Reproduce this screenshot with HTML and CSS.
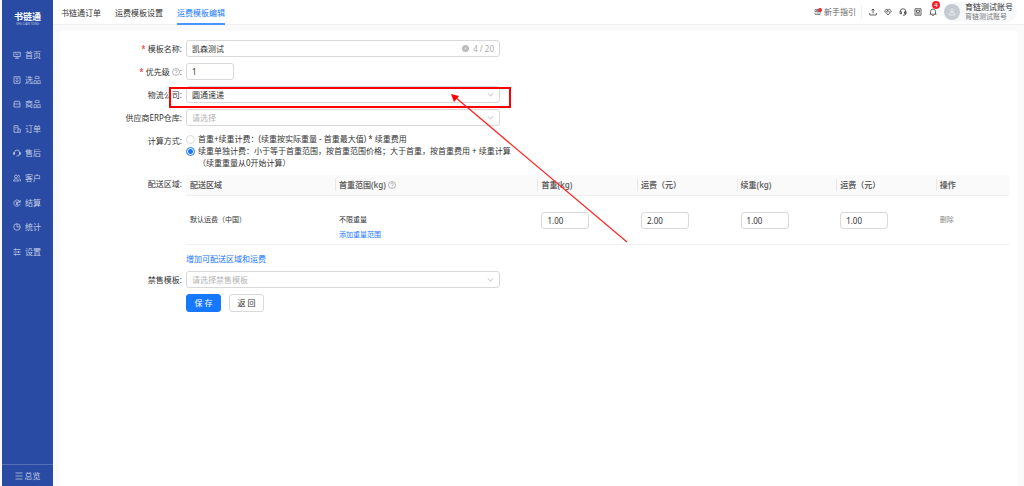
FILE: index.html
```html
<!DOCTYPE html>
<html lang="zh-CN">
<head>
<meta charset="utf-8">
<title>运费模板编辑</title>
<link rel="stylesheet" href="styles.css">
</head>
<body>
<div class="app">
  <aside class="sidebar">
    <div class="logo"><strong>书链通</strong><small>SHU LIAN TONG</small></div>
    <nav>
      <ul class="menu">
        <li><a href="#"><svg class="icon" viewBox="0 0 16 16"><path d="M1.500 2.500h13v8.500h-13zM4 14.500h8M8 11v3M4.500 6h3l1 2 3-3"/></svg>首页</a></li>
        <li><a href="#"><svg class="icon" viewBox="0 0 16 16"><path d="M2 1.500h12v13H2zM5 4.500h6M8 7l2.500 2.500L8 12 5.500 9.500z"/></svg>选品</a></li>
        <li><a href="#"><svg class="icon" viewBox="0 0 16 16"><path d="M3.500 2.500h9l1.500 4v7.500H2V6.500zM2 8h12"/></svg>商品</a></li>
        <li><a href="#"><svg class="icon" viewBox="0 0 16 16"><path d="M10 8V1.500H2v13h12.500V8H10v6.500M4.500 5h3M4.500 8h2"/></svg>订单</a></li>
        <li><a href="#"><svg class="icon" viewBox="0 0 16 16"><path d="M3 10V7a5 5 0 0 1 10 0v3a4 4 0 0 1-4 4H7M1 7h2v4H1zM13 7h2v4h-2z"/></svg>售后</a></li>
        <li><a href="#"><svg class="icon" viewBox="0 0 16 16"><circle cx="6" cy="5" r="3"/><path d="M1 14c0-6 10-6 10 0zM10 2.500a2.500 2.500 0 0 1 1 5M12 9c2 .5 3 2.500 3 5h-2"/></svg>客户</a></li>
        <li><a href="#"><svg class="icon" viewBox="0 0 16 16"><path d="M14 6.500A6.300 6.300 0 1 0 14 10M14.500 2v4.500H10M5.500 4.500 8 7.500l2.500-3M5.500 8h5M5.500 10.500h5M8 7.500v5"/></svg>结算</a></li>
        <li><a href="#"><svg class="icon" viewBox="0 0 16 16"><circle cx="8" cy="8" r="6.500"/><path d="M8 1.500V8h6.500"/></svg>统计</a></li>
        <li><a href="#"><svg class="icon" viewBox="0 0 16 16"><path d="M1 3h14M1 8h14M1 13h14M5 1v4M11 6v4M5 11v4"/></svg>设置</a></li>
      </ul>
    </nav>
    <button class="overview" type="button"><svg class="icon" viewBox="0 0 16 16"><path d="M1 2h14M1 8h14M1 14h14"/></svg>总览</button>
  </aside>

  <div class="content">
    <header class="topbar">
      <nav class="tabs">
        <a href="#">书链通订单</a>
        <a href="#">运费模板设置</a>
        <a href="#" class="active" aria-current="page">运费模板编辑</a>
      </nav>
      <div class="tools">
        <a class="guide" href="#"><svg class="icon" viewBox="0 0 16 16"><path d="M9 3H2v4h10v6H2V9M4 5h4M5 10h5"/><circle class="dot" cx="12" cy="4" r="4"/></svg>新手指引</a>
        <button type="button" aria-label="上传"><svg class="icon" viewBox="0 0 16 16"><path d="M8 11V2M5 5l3-3 3 3M1.500 10v4h13v-4"/></svg></button>
        <button type="button" aria-label="合作"><svg class="icon" viewBox="0 0 16 16"><path d="M1 6l4-3.500 3 1.500 3-1.500L15 6l-7 8zM8 4 5 7l2 1 2-1.500L12 9"/></svg></button>
        <button type="button" aria-label="客服"><svg class="icon" viewBox="0 0 16 16"><path d="M2.500 8V7a5.500 5.500 0 0 1 11 0v4a3.500 3.500 0 0 1-3.500 3.500H8M2 7.500h3v4H2zM11 7.500h3v4h-3z"/></svg></button>
        <button type="button" aria-label="账单"><svg class="icon" viewBox="0 0 16 16"><path d="M2 1.500h12v13H2zM5 4.500h6v4H5zM4.500 11.500h7"/></svg></button>
        <button type="button" class="bell" aria-label="通知"><svg class="icon" viewBox="0 0 16 16"><path d="M3 12V7a5 5 0 0 1 10 0v5M1 12.500h14M6.500 15h3"/></svg><span class="badge">4</span></button>
        <div class="account">
          <span class="avatar"><svg class="icon" viewBox="0 0 16 16"><circle cx="8" cy="5" r="3"/><path d="M2 14v-2l3-3h6l3 3v2z"/></svg></span>
          <span class="who"><span>育链测试账号</span><small>育链测试账号</small></span>
        </div>
      </div>
    </header>

    <main class="panel">
      <form class="form">
        <label class="label required" for="name">模板名称:</label>
        <div class="field wide">
          <input id="name" type="text" value="凯森测试">
          <span class="suffix"><svg class="clear" viewBox="0 0 16 16"><circle cx="8" cy="8" r="8"/><path d="M6 6l4 4M10 6l-4 4"/></svg>4 / 20</span>
        </div>

        <label class="label required" for="priority">优先级 <svg class="help" viewBox="0 0 16 16"><circle cx="8" cy="8" r="7"/><path d="M5.500 6.500C5.500 3 10.500 3 10.500 6.500 10.500 8 8 8 8 10M8 11.500V13"/></svg>:</label>
        <div class="field"><input id="priority" class="short" type="text" value="1"></div>

        <label class="label" for="carrier">物流公司:</label>
        <div class="field wide">
          <select id="carrier"><option>圆通速递</option></select>
          <svg class="chevron" viewBox="0 0 16 16"><path d="M2 5l6 7 6-7"/></svg>
          <span class="highlight"></span>
        </div>

        <label class="label" for="store">供应商ERP仓库:</label>
        <div class="field wide">
          <select id="store" class="empty"><option>请选择</option></select>
          <svg class="chevron" viewBox="0 0 16 16"><path d="M2 5l6 7 6-7"/></svg>
        </div>

        <span class="label" id="method">计算方式:</span>
        <div class="radios" role="radiogroup" aria-labelledby="method">
          <label><input type="radio" name="method"><span>首重+续重计费：(续重按实际重量 - 首重最大值) * 续重费用</span></label>
          <label><input type="radio" name="method" checked><span>续重单独计费：小于等于首重范围，按首重范围价格；大于首重，按首重费用 + 续重计算<br>（续重重量从0开始计算）</span></label>
        </div>

        <span class="label">配送区域:</span>
        <div class="region">
          <table>
            <thead>
              <tr><th class="c-area">配送区域</th><th class="c-range">首重范围(kg) <svg class="help" viewBox="0 0 16 16"><circle cx="8" cy="8" r="7"/><path d="M5.500 6.500C5.500 3 10.500 3 10.500 6.500 10.500 8 8 8 8 10M8 11.500V13"/></svg></th><th class="c-num">首重(kg)</th><th class="c-num">运费（元）</th><th class="c-num">续重(kg)</th><th class="c-num">运费（元）</th><th>操作</th></tr>
            </thead>
            <tbody>
              <tr>
                <td>默认运费（中国）</td>
                <td><div class="range"><span>不限重量</span><a href="#">添加重量范围</a></div></td>
                <td><input class="short" type="text" aria-label="首重(kg)" value="1.00"></td>
                <td><input class="short" type="text" aria-label="首重运费（元）" value="2.00"></td>
                <td><input class="short" type="text" aria-label="续重(kg)" value="1.00"></td>
                <td><input class="short" type="text" aria-label="续重运费（元）" value="1.00"></td>
                <td><button type="button" class="delete" disabled>删除</button></td>
              </tr>
            </tbody>
          </table>
          <a class="add" href="#">增加可配送区域和运费</a>
        </div>

        <label class="label" for="ban">禁售模板:</label>
        <div class="field wide">
          <select id="ban" class="empty"><option>请选择禁售模板</option></select>
          <svg class="chevron" viewBox="0 0 16 16"><path d="M2 5l6 7 6-7"/></svg>
        </div>

        <div class="actions"><button type="submit" class="btn primary">保 存</button><button type="button" class="btn">返 回</button></div>
      </form>
    </main>
  </div>
</div>
<svg class="arrow" width="180" height="152" viewBox="0 0 180 152" aria-hidden="true"><path class="line" d="M4 3 176 148"/><path class="head" d="M0 0 8 2 3 8z"/></svg>
</body>
</html>
```
FILE: styles.css
```css
* { box-sizing: border-box; }
body {
  margin: 0;
  font: 8px/12px "Noto Sans", "Noto Sans CJK SC", sans-serif;
  color: #333;
  background: #fafafa;
}
a { color: inherit; text-decoration: none; }
button, input, select { font: inherit; color: inherit; }
button { padding: 0; border: 0; background: none; }
.icon { width: 8px; height: 8px; flex: none; fill: none; stroke: currentColor; stroke-width: 1.5; }
.app { display: flex; min-height: 100vh; padding-left: 2px; }

.sidebar { display: flex; flex-direction: column; flex: none; width: 51px; background: #294ba3; color: #c3cde6; }
.logo { display: flex; flex-direction: column; align-items: center; padding-top: 11px; color: #fff; }
.logo strong { font-size: 9px; line-height: 11px; }
.logo small { font-size: 3px; line-height: 4px; color: #c3cde6; }
.menu { display: grid; min-height: 221px; margin: 17px 0 0; padding: 0; list-style: none; }
.menu a { display: flex; align-items: center; gap: 4px; height: 100%; padding-left: 11px; }
.overview { display: flex; align-items: center; justify-content: center; gap: 2px; height: 22px; margin-top: auto; border-top: 1px solid #5470b6; }

.content { display: flex; flex: 1; flex-direction: column; min-width: 0; }
.topbar { display: flex; justify-content: space-between; height: 25px; padding: 0 7px 0 8px; background: #fff; border-bottom: 1px solid #f0f0f0; }
.tabs { display: flex; gap: 14px; }
.tabs a { height: 25px; line-height: 25px; border-bottom: 2px solid transparent; }
.tabs .active { color: #1677ff; border-color: #4a94ff; }
.tools { display: flex; align-items: center; gap: 7px; }
.tools button { display: flex; color: #333; }
.guide { display: flex; align-items: center; gap: 2px; padding-right: 5px; border-right: 1px solid #eee; color: #666; }
.dot { fill: #f5222d; stroke: none; }
.bell { position: relative; }
.badge { position: absolute; top: -7px; left: 3px; width: 8px; height: 8px; border-radius: 4px; background: #f5222d; color: #fff; font-size: 6px; line-height: 8px; text-align: center; }
.account { display: flex; align-items: center; gap: 5px; height: 20px; padding-right: 4px; border-radius: 10px; background: #f7f8fa; }
.avatar { display: flex; align-items: center; justify-content: center; width: 16px; height: 16px; border-radius: 50%; background: #c5cad1; color: #eef0f3; }
.who { display: flex; flex-direction: column; line-height: 10px; }
.who small { font-size: 7px; color: #777; }

.panel { flex: 1; margin: 6px 6px 0; padding: 9px 9px 8px 0; border-radius: 4px 4px 0 0; background: #fff; }
.form { display: grid; grid-template-columns: 123px minmax(0, 1fr); gap: 6px 4px; }
.label { line-height: 17px; text-align: right; }
.required::before { content: "* "; color: #f5222d; }
.help { width: 8px; height: 8px; vertical-align: -1px; fill: none; stroke: #777; stroke-width: 1; }
.field { position: relative; display: flex; align-items: center; height: 17px; }
.wide { width: 100%; max-width: 314px; }
.field input, .field select, .short { height: 17px; padding: 0 5px; border: 1px solid #d9d9d9; border-radius: 3px; outline: 0; background: #fff; }
.wide input, .wide select { width: 100%; appearance: none; }
.field .short, .short { display: block; width: 48px; }
.field .empty { color: #b5b5b5; }
.suffix { position: absolute; right: 6px; display: flex; align-items: center; gap: 4px; color: #aaa; }
.clear { width: 7px; height: 7px; fill: #bbb; stroke: #fff; }
.clear circle { stroke: none; }
.chevron { position: absolute; right: 6px; width: 7px; height: 7px; fill: none; stroke: #bbb; stroke-width: 2; pointer-events: none; }
.highlight { position: absolute; inset: 1px -11px -5px -17px; border: 2px solid #f00; pointer-events: none; }

.radios { padding-top: 1px; }
.radios label { display: flex; align-items: flex-start; gap: 3px; }
.radios input { appearance: none; flex: none; width: 9px; height: 9px; margin: 2px 0 0; border: 1px solid #d9d9d9; border-radius: 50%; background: #fff; }
.radios input:checked { border: 1px solid #1677ff; background: radial-gradient(#1677ff 0 2px, #fff 3px); }
table { width: 100%; table-layout: fixed; border-collapse: separate; border-spacing: 0; }
th { height: 21px; padding: 0 4px; border-bottom: 1px solid #f0f0f0; background: #fafafa; font-weight: 600; text-align: left; color: #666; }
th + th { background: linear-gradient(#e8e8e8, #e8e8e8) left / 1px 12px no-repeat #fafafa; }
td { height: 49px; padding: 0 4px; border-bottom: 1px solid #f0f0f0; font-size: 7px; }
td input { font-size: 8px; }
.c-area { width: 18.1%; }
.c-range { width: 24.6%; }
.c-num { width: 12.1%; }
.range { display: flex; flex-direction: column; gap: 3px; padding-top: 15px; }
.region a { color: #1677ff; }
.delete { color: #888; }
.add { display: inline-block; margin-top: 8px; }
.actions { display: flex; grid-column: 2; gap: 8px; }
.btn { width: 35px; height: 18px; border: 1px solid #d9d9d9; border-radius: 3px; background: #fff; }
.primary { border-color: #1677ff; background: #1677ff; color: #fff; }
.arrow { position: absolute; top: 94px; left: 451px; pointer-events: none; }
.line { stroke: #f22; stroke-width: 1.2; }
.head { fill: #f00; }
```
